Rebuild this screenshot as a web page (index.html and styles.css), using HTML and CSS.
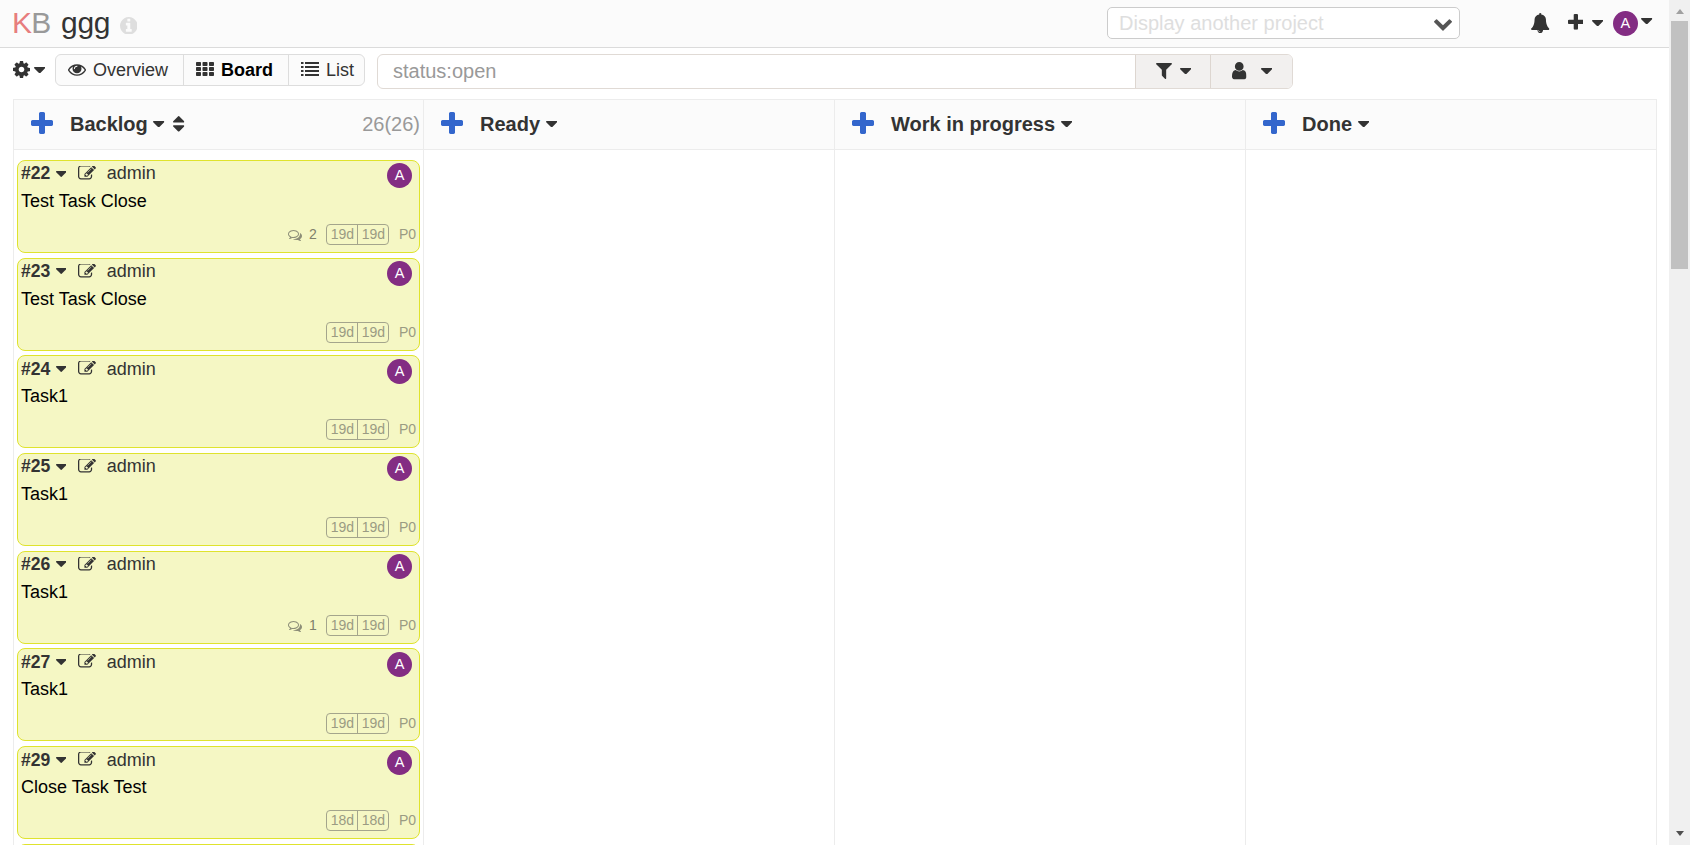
FILE: index.html
```
<!DOCTYPE html>
<html lang="en">
<head>
<meta charset="utf-8">
<title>ggg</title>
<link rel="stylesheet" href="styles.css">
</head>
<body>
<svg class="sprite" aria-hidden="true">
  <symbol id="caret" viewBox="384 640 1024 576"><path d="M1408 704q0 26-19 45l-448 448q-19 19-45 19t-45-19l-448-448q-19-19-19-45t19-45 45-19h896q26 0 45 19t19 45z"/></symbol>
  <symbol id="cog" viewBox="128 128 1536 1536"><path d="M1152 896q0-106-75-181t-181-75-181 75-75 181 75 181 181 75 181-75 75-181zm512-109v222q0 12-8 23t-20 13l-185 28q-19 54-39 91 35 50 107 138 10 12 10 25t-9 23q-27 37-99 108t-94 71q-12 0-26-9l-138-108q-44 23-91 38-16 136-29 186-7 28-36 28h-222q-14 0-24.500-8.500t-11.500-21.500l-28-184q-49-16-90-37l-141 107q-10 9-25 9-14 0-25-11-126-114-165-168-7-10-7-23 0-12 8-23 15-21 51-66.500t54-70.500q-27-50-41-99l-183-27q-13-2-21-12.500t-8-23.500v-222q0-12 8-23t19-13l186-28q14-46 39-92-40-57-107-138-10-12-10-24 0-10 9-23 26-36 98.500-107.500t94.500-71.500q13 0 26 10l138 107q44-23 91-38 16-136 29-186 7-28 36-28h222q14 0 24.500 8.500t11.500 21.500l28 184q49 16 90 37l142-107q9-9 24-9 13 0 25 10 129 119 165 170 7 8 7 22 0 12-8 23-15 21-51 66.500t-54 70.500q26 50 41 98l183 28q13 2 21 12.500t8 23.500z"/></symbol>
  <symbol id="plus" viewBox="192 128 1408 1408"><path d="M1600 736v192q0 40-28 68t-68 28h-416v416q0 40-28 68t-68 28h-192q-40 0-68-28t-28-68v-416h-416q-40 0-68-28t-28-68v-192q0-40 28-68t68-28h416v-416q0-40 28-68t68-28h192q40 0 68 28t28 68v416h416q40 0 68 28t28 68z"/></symbol>
  <symbol id="filter" viewBox="190 256 1412 1408"><path d="M1595 295q17 41-14 70l-493 493v742q0 42-39 59-13 5-25 5-27 0-45-19l-256-256q-19-19-19-45v-486l-493-493q-31-29-14-70 17-39 59-39h1280q42 0 59 39z"/></symbol>
  <symbol id="info" viewBox="128 128 1536 1536"><path d="M1152 1376v-160q0-14-9-23t-23-9h-96v-512q0-14-9-23t-23-9h-320q-14 0-23 9t-9 23v160q0 14 9 23t23 9h96v320h-96q-14 0-23 9t-9 23v160q0 14 9 23t23 9h448q14 0 23-9t9-23zm-128-896v-160q0-14-9-23t-23-9h-192q-14 0-23 9t-9 23v160q0 14 9 23t23 9h192q14 0 23-9t9-23zm640 416q0 209-103 385.500t-279.500 279.500-385.500 103-385.500-103-279.500-279.500-103-385.500 103-385.500 279.500-279.500 385.500-103 385.500 103 279.500 279.500 103 385.500z"/></symbol>
  <symbol id="user" viewBox="256 128 1280 1536"><path d="M1536 1399q0 109-62.500 187t-150.500 78h-854q-88 0-150.500-78t-62.500-187q0-85 8.500-160.500t31.500-152 58.500-131 94-89 134.500-34.500q131 128 313 128t313-128q76 0 134.500 34.500t94 89 58.500 131 31.500 152 8.500 160.500zm-256-887q0 159-112.500 271.500t-271.500 112.500-271.500-112.500-112.500-271.500 112.500-271.500 271.500-112.500 271.500 112.500 112.500 271.500z"/></symbol>
  <symbol id="eye" viewBox="0 384 1792 1152"><path d="M1664 960q-152-236-381-353 61 104 61 225 0 185-131.500 316.500t-316.500 131.500-316.500-131.500-131.500-316.500q0-121 61-225-229 117-381 353 133 205 333.500 326.500t434.500 121.500 434.500-121.500 333.500-326.500zm-720-384q0-20-14-34t-34-14q-125 0-214.500 89.500t-89.500 214.500q0 20 14 34t34 14 34-14 14-34q0-86 61-147t147-61q20 0 34-14t14-34zm848 384q0 34-20 69-140 230-376.500 368.500t-499.500 138.500-499.500-139-376.500-368q-20-35-20-69t20-69q140-229 376.500-368t499.500-139 499.500 139 376.500 368q20 35 20 69z"/></symbol>
  <symbol id="edit" viewBox="0 256 1792 1280"><path d="M888 1184l116-116-152-152-116 116v56h96v96h56zm440-720q-16-16-33 1l-350 350q-17 17-1 33t33-1l350-350q17-17 1-33zm80 594v190q0 119-84.500 203.500t-203.500 84.500h-832q-119 0-203.500-84.500t-84.500-203.500v-832q0-119 84.500-203.500t203.500-84.500h832q63 0 117 25 15 7 18 23 3 17-9 29l-49 49q-14 14-32 8-23-6-45-6h-832q-66 0-113 47t-47 113v832q0 66 47 113t113 47h832q66 0 113-47t47-113v-126q0-13 9-22l64-64q15-15 35-7t20 29zm-96-738l288 288-672 672h-288v-288zm444 132l-92 92-288-288 92-92q28-28 68-28t68 28l152 152q28 28 28 68t-28 68z"/></symbol>
  <symbol id="comments" viewBox="0 256 1792 1408"><path d="M704 384q-153 0-286 52t-211.500 141-78.500 191q0 82 53 158t149 132l97 56-35 84q34-20 62-39l44-31 53 10q78 14 153 14 153 0 286-52t211.500-141 78.500-191-78.500-191-211.500-141-286-52zm0-128q191 0 353.500 68.500t256.500 186.500 94 257-94 257-256.500 186.500-353.500 68.500q-86 0-176-16-124 88-278 128-36 9-86 16h-3q-11 0-20.500-8t-11.500-21q-1-3-1-6.500t.5-6.500 2-6l2.500-5 3.500-5.500 4-5 4.500-5 4-4.500q5-6 23-25t26-29.500 22.500-29 25-38.500 20.500-44q-124-72-195-177t-71-224q0-139 94-257t256.500-186.500 353.500-68.500zm822 1169q10 24 20.500 44t25 38.500 22.500 29 26 29.500 23 25q1 1 4 4.500t4.500 5 4 5 3.500 5.500l2.500 5 2 6 .5 6.500-1 6.500q-3 14-13 22t-22 7q-50-7-86-16-154-40-278-128-90 16-176 16-271 0-472-132 58 4 88 4 161 0 309-45t264-129q125-92 192-212t67-254q0-77-23-152 129 71 204 178t75 230q0 120-71 224.500t-195 176.500z"/></symbol>
  <symbol id="bell" viewBox="64 0 1664 1792"><path d="M912 1696q0-16-16-16-59 0-101.500-42.500t-42.500-101.500q0-16-16-16t-16 16q0 73 51.500 124.500t124.500 51.500q16 0 16-16zm816-288q0 52-38 90t-90 38h-448q0 106-75 181t-181 75-181-75-75-181h-448q-52 0-90-38t-38-90q50-42 91-88t85-119.500 74.500-158.500 50-206 19.500-260q0-152 117-282.500t307-158.500q-8-19-8-39 0-40 28-68t68-28 68 28 28 68q0 20-8 39 190 28 307 158.500t117 282.500q0 139 19.500 260t50 206 74.500 158.500 85 119.500 91 88z"/></symbol>
  <symbol id="chevron" viewBox="90 533 1612 1035"><path d="M1683 808l-742 741q-19 19-45 19t-45-19l-742-741q-19-19-19-45.500t19-45.500l166-165q19-19 45-19t45 19l531 531 531-531q19-19 45-19t45 19l166 165q19 19 19 45.500t-19 45.500z"/></symbol>
  <symbol id="sort" viewBox="384 192 1024 1408"><path d="M1408 1088q0 26-19 45l-448 448q-19 19-45 19t-45-19l-448-448q-19-19-19-45t19-45 45-19h896q26 0 45 19t19 45zm0-384q0 26-19 45t-45 19h-896q-26 0-45-19t-19-45 19-45l448-448q19-19 45-19t45 19l448 448q19 19 19 45z"/></symbol>
  <symbol id="grid" viewBox="0 0 18 14"><path d="M.8 0h3.400q.8 0 .8.800v2.400q0 .8-.8.800H.8Q0 4 0 3.200V.8Q0 0 .8 0zM7.300 0h3.400q.8 0 .8.800v2.400q0 .8-.8.800H7.300q-.8 0-.8-.8V.8q0-.8.8-.8zM13.800 0h3.400q.8 0 .8.800v2.400q0 .8-.8.800h-3.400q-.8 0-.8-.8V.8q0-.8.8-.8zM.8 5h3.400q.8 0 .8.800v2.400q0 .8-.8.800H.8Q0 9 0 8.200V5.800Q0 5 .8 5zM7.300 5h3.400q.8 0 .8.800v2.400q0 .8-.8.800H7.300q-.8 0-.8-.8V5.800q0-.8.8-.8zM13.800 5h3.400q.8 0 .8.800v2.400q0 .8-.8.800h-3.400q-.8 0-.8-.8V5.800q0-.8.8-.8zM.8 10h3.400q.8 0 .8.800v2.400q0 .8-.8.800H.8q-.8 0-.8-.8v-2.400q0-.8.8-.8zM7.300 10h3.400q.8 0 .8.800v2.400q0 .8-.8.800H7.300q-.8 0-.8-.8v-2.400q0-.8.8-.8zM13.800 10h3.400q.8 0 .8.800v2.400q0 .8-.8.800h-3.400q-.8 0-.8-.8v-2.400q0-.8.8-.8z"/></symbol>
  <symbol id="list" viewBox="0 0 18 14"><path d="M0 0h2.500v2H0zM4 0h14v2H4zM0 4h2.500v2H0zM4 4h14v2H4zM0 8h2.500v2H0zM4 8h14v2H4zM0 12h2.500v2H0zM4 12h14v2H4z"/></symbol>
</svg>

<div class="page">
  <header class="topbar">
    <h1 class="brand"><span class="logo"><span class="logo-k">K</span>B</span><span class="project">ggg</span><svg class="i-info"><use href="#info"/></svg></h1>
    <div class="select"><span>Display another project</span><svg class="i-chevron"><use href="#chevron"/></svg></div>
    <svg class="i-bell"><use href="#bell"/></svg>
    <svg class="i-add"><use href="#plus"/></svg>
    <svg class="caret add-caret"><use href="#caret"/></svg>
    <span class="avatar">A</span>
    <svg class="caret user-caret"><use href="#caret"/></svg>
  </header>

  <nav class="toolbar">
    <a class="settings"><svg class="i-cog"><use href="#cog"/></svg><svg class="caret"><use href="#caret"/></svg></a>
    <ul class="views">
      <li class="view overview"><svg class="i-eye"><use href="#eye"/></svg>Overview</li>
      <li class="view active"><svg class="i-view"><use href="#grid"/></svg>Board</li>
      <li class="view list"><svg class="i-view"><use href="#list"/></svg>List</li>
    </ul>
    <div class="search">
      <div class="query">status:open</div>
      <div class="btn filter"><svg class="i-filter"><use href="#filter"/></svg><svg class="caret"><use href="#caret"/></svg></div>
      <div class="btn users"><svg class="i-user"><use href="#user"/></svg><svg class="caret"><use href="#caret"/></svg></div>
    </div>
  </nav>

  <main class="board">
    <section class="column">
      <h2 class="head"><svg class="i-plus"><use href="#plus"/></svg>Backlog<svg class="caret"><use href="#caret"/></svg><svg class="i-sort"><use href="#sort"/></svg><span class="count">26(26)</span></h2>
      <div class="tasks">
        <article class="task">
          <div class="task-top"><b>#22</b><svg class="caret"><use href="#caret"/></svg><svg class="i-edit"><use href="#edit"/></svg><span class="who">admin</span><span class="avatar">A</span></div>
          <div class="task-title">Test Task Close</div>
          <div class="meta"><svg class="i-comments"><use href="#comments"/></svg><span class="comments">2</span><span class="age"><span>19d</span><span>19d</span></span><span>P0</span></div>
        </article>
        <article class="task">
          <div class="task-top"><b>#23</b><svg class="caret"><use href="#caret"/></svg><svg class="i-edit"><use href="#edit"/></svg><span class="who">admin</span><span class="avatar">A</span></div>
          <div class="task-title">Test Task Close</div>
          <div class="meta"><span class="age"><span>19d</span><span>19d</span></span><span>P0</span></div>
        </article>
        <article class="task">
          <div class="task-top"><b>#24</b><svg class="caret"><use href="#caret"/></svg><svg class="i-edit"><use href="#edit"/></svg><span class="who">admin</span><span class="avatar">A</span></div>
          <div class="task-title">Task1</div>
          <div class="meta"><span class="age"><span>19d</span><span>19d</span></span><span>P0</span></div>
        </article>
        <article class="task">
          <div class="task-top"><b>#25</b><svg class="caret"><use href="#caret"/></svg><svg class="i-edit"><use href="#edit"/></svg><span class="who">admin</span><span class="avatar">A</span></div>
          <div class="task-title">Task1</div>
          <div class="meta"><span class="age"><span>19d</span><span>19d</span></span><span>P0</span></div>
        </article>
        <article class="task">
          <div class="task-top"><b>#26</b><svg class="caret"><use href="#caret"/></svg><svg class="i-edit"><use href="#edit"/></svg><span class="who">admin</span><span class="avatar">A</span></div>
          <div class="task-title">Task1</div>
          <div class="meta"><svg class="i-comments"><use href="#comments"/></svg><span class="comments">1</span><span class="age"><span>19d</span><span>19d</span></span><span>P0</span></div>
        </article>
        <article class="task">
          <div class="task-top"><b>#27</b><svg class="caret"><use href="#caret"/></svg><svg class="i-edit"><use href="#edit"/></svg><span class="who">admin</span><span class="avatar">A</span></div>
          <div class="task-title">Task1</div>
          <div class="meta"><span class="age"><span>19d</span><span>19d</span></span><span>P0</span></div>
        </article>
        <article class="task">
          <div class="task-top"><b>#29</b><svg class="caret"><use href="#caret"/></svg><svg class="i-edit"><use href="#edit"/></svg><span class="who">admin</span><span class="avatar">A</span></div>
          <div class="task-title">Close Task Test</div>
          <div class="meta"><span class="age"><span>18d</span><span>18d</span></span><span>P0</span></div>
        </article>
        <article class="task"></article>
      </div>
    </section>
    <section class="column"><h2 class="head"><svg class="i-plus"><use href="#plus"/></svg>Ready<svg class="caret"><use href="#caret"/></svg></h2></section>
    <section class="column"><h2 class="head"><svg class="i-plus"><use href="#plus"/></svg>Work in progress<svg class="caret"><use href="#caret"/></svg></h2></section>
    <section class="column"><h2 class="head"><svg class="i-plus"><use href="#plus"/></svg>Done<svg class="caret"><use href="#caret"/></svg></h2></section>
  </main>
</div>

<div class="scrollbar"><i class="arrow up"></i><div class="thumb"></div><i class="arrow down"></i></div>
</body>
</html>
```

FILE: styles.css
```
* { box-sizing: border-box; }
body {
  margin: 0;
  display: flex;
  height: 845px;
  overflow: hidden;
  background: #fff;
  color: #333;
  font: 18px/22px "Liberation Sans", Arial, sans-serif;
}
svg { fill: currentColor; flex: none; display: block; }
.sprite { position: absolute; width: 0; height: 0; }
.page { width: 1669px; height: 845px; overflow: hidden; display: flex; flex-direction: column; flex: none; }
.caret { width: 11.4px; height: 6.4px; }

/* top bar */
.topbar {
  height: 48px;
  flex: none;
  display: flex;
  align-items: flex-start;
  background: #fbfbfb;
  border-bottom: 1px solid #dbdbdb;
  padding-left: 12px;
}
.brand { margin: 0; width: 1095px; display: flex; font-size: 30px; line-height: 34px; font-weight: 400; padding-top: 6px; }
.logo { color: #999; width: 49px; letter-spacing: -.8px; }
.project { width: 49px; letter-spacing: -.3px; }
.logo-k { color: #e77e7e; }
.i-info { width: 17.600px; height: 17.600px; color: #dedede; margin: 10.600px 0 0 9.500px; }
.select {
  width: 353px;
  height: 32px;
  margin-top: 7px;
  border: 1px solid #ccc;
  border-radius: 5px;
  background: #fff;
  color: #dedede;
  font-size: 20px;
  line-height: 30px;
  padding: 0 7px 0 11px;
  display: flex;
  justify-content: space-between;
}
.i-chevron { width: 18px; height: 12px; color: #555; margin-top: 11px; }
.i-bell { width: 18.500px; height: 20px; margin: 13px 0 0 71px; }
.i-add { width: 15.700px; height: 15.700px; margin: 14.300px 0 0 18px; }
.add-caret { margin: 20px 0 0 8.700px; }
.avatar {
  width: 25px;
  height: 25px;
  border-radius: 50%;
  background: #832d83;
  color: #fff;
  font-size: 14.500px;
  line-height: 25px;
  text-align: center;
  flex: none;
}
.topbar .avatar { margin: 11px 0 0 9.500px; }
.user-caret { margin: 18px 0 0 3.500px; }

/* toolbar */
.toolbar { display: flex; height: 51px; flex: none; padding: 6px 0 0 12.500px; }
.settings { width: 42.500px; display: flex; }
.i-cog { width: 17px; height: 17px; margin: 7.200px 4.500px 0 0; }
.settings .caret { margin-top: 13px; }
.views {
  list-style: none;
  margin: 0;
  padding: 0;
  width: 310px;
  height: 32px;
  display: flex;
  border: 1px solid #ddd;
  border-radius: 6px;
  background: #fbfbfb;
}
.view { display: flex; align-items: flex-start; line-height: 30px; border-right: 1px solid #ddd; padding-left: 12px; }
.view svg { margin-right: 7px; }
.overview { width: 128px; }
.active { width: 105px; color: #000; font-weight: 700; }
.active svg { color: #333; }
.list { border-right: 0; }
.i-eye { width: 18px; height: 12px; margin-top: 9px; }
.i-view { width: 18px; height: 14px; margin-top: 7px; }
.search {
  display: flex;
  width: 916px;
  height: 35px;
  margin-left: 12px;
  border: 1px solid #e0dad5;
  border-radius: 6px;
  overflow: hidden;
}
.query { width: 757px; padding-left: 15px; font-size: 20px; line-height: 32px; color: #999; }
.btn { background: #f2f0ef; border-left: 1px solid #ddd6d0; display: flex; align-items: center; }
.filter { width: 75px; padding: 0 0 1px 19.500px; }
.users { flex: 1; padding: 0 0 1px 21px; }
.i-filter { width: 16px; height: 16px; margin-right: 8px; }
.i-user { width: 14.500px; height: 17.500px; margin-right: 14.500px; }

/* board */
.board { flex: 1; width: 1644px; margin-left: 13px; display: flex; border: 1px solid #ececec; border-bottom: 0; min-height: 0; }
.column { flex: 0 0 411px; border-right: 1px solid #ececec; }
.column:first-child { flex-basis: 410px; }
.column:last-child { flex: 1; border-right: 0; }
.head {
  margin: 0;
  height: 50px;
  background: #fbfbfb;
  border-bottom: 1px solid #ececec;
  display: flex;
  align-items: center;
  font-size: 20px;
  padding: 0 3px 1px 16.500px;
}
.head .caret { margin-left: 5.500px; }
.i-plus { color: #36c; width: 22px; height: 22px; margin-right: 17.500px; margin-top: -2px; }
.i-sort { width: 11.400px; height: 15.700px; margin-left: 8.500px; }
.count { margin-left: auto; font-weight: 400; color: #999; }
.tasks { padding: 10px 3px 0; }
.task {
  height: 92.900px;
  margin-bottom: 4.800px;
  background: #f5f7c4;
  border: 1px solid #dfe32d;
  border-radius: 8px;
  padding: 1.400px 4px 0 3px;
}
.task-top { display: flex; height: 26.500px; line-height: 22px; }
.task-top b { width: 35px; font-size: 17.600px; }
.task-top .caret { width: 10.400px; height: 6px; margin-top: 8.300px; }
.i-edit { width: 18px; height: 14px; margin: 3.600px 0 0 11.400px; }
.who { margin-left: 11px; }
.task .avatar { margin: 1px 3px 0 auto; }
.task-title { color: #000; height: 35.200px; line-height: 24px; }
.meta { display: flex; justify-content: flex-end; font-size: 14px; line-height: 21px; color: #9a9b83; }
.meta > span:last-child { margin-left: 9.500px; margin-right: -1px; }
.i-comments { width: 14px; height: 11px; margin: 6px 7px 0 0; color: #8d8e78; }
.comments { margin-right: 9.500px; color: #7f806b; }
.age { display: flex; width: 63px; height: 21px; line-height: 19px; border: 1px solid #a4a58c; border-radius: 4px; }
.age span { flex: 1; text-align: center; }
.age span + span { border-left: 1px solid #a4a58c; }

/* scrollbar */
.scrollbar { width: 21px; background: #f0f0f0; display: flex; flex-direction: column; align-items: center; }
.thumb { width: 17px; height: 248px; background: #c1c1c1; margin-top: 7px; }
.arrow { border: 4.500px solid transparent; width: 0; height: 0; }
.up { border-top: 0; border-bottom: 5px solid #a0a0a0; margin-top: 9px; }
.down { border-bottom: 0; border-top: 5px solid #505050; margin: auto 0 9px; }
```
